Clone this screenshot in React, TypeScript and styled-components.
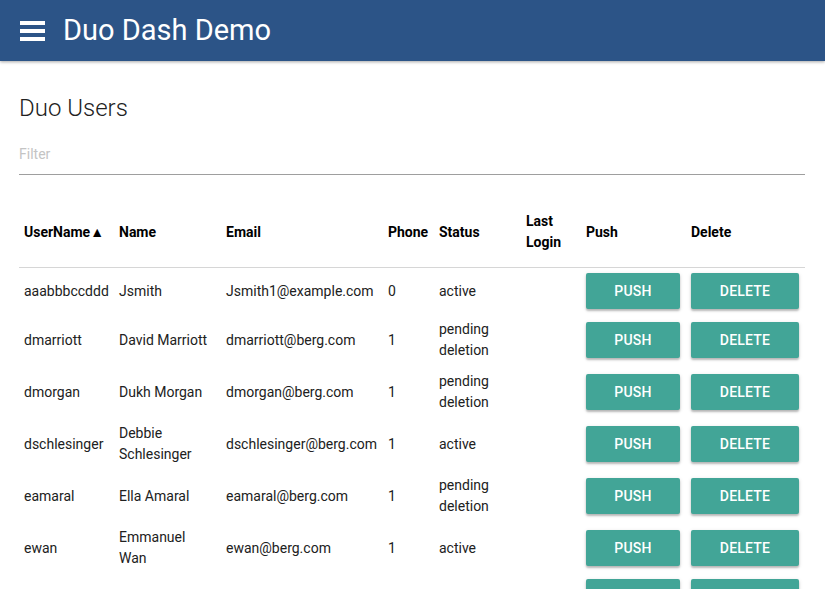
import React from "react";
import styled, { createGlobalStyle } from "styled-components";

const Global = createGlobalStyle`
  html, body { margin: 0; padding: 0; background: #fff; }
  body { font-family: Roboto, "Noto Sans", Arial, sans-serif; color: #212121; }
  * { box-sizing: border-box; }
`;

const AppBar = styled.header`
  height: 61px;
  background: #2c5487;
  display: flex;
  align-items: center;
  padding-left: 20px;
  gap: 18px;
  box-shadow: 0 1px 3px rgba(0, 0, 0, 0.35);
  position: relative;
  z-index: 1;
`;

const Burger = styled.div`
  width: 25px;
  display: flex;
  flex-direction: column;
  gap: 4px;
  span {
    display: block;
    height: 4px;
    background: #fff;
  }
`;

const AppTitle = styled.h1`
  margin: 0;
  color: #fff;
  font-size: 29px;
  font-weight: 400;
  line-height: 1;
`;

const Main = styled.main`
  padding: 0 20px 0 19px;
`;

const PageTitle = styled.h2`
  margin: 31px 0 0;
  font-size: 24px;
  font-weight: 300;
  line-height: 32px;
  color: #212121;
`;

const FilterInput = styled.input`
  display: block;
  width: 786px;
  margin-top: 20px;
  border: none;
  border-bottom: 1px solid #9e9e9e;
  padding: 0 0 10px;
  font-family: inherit;
  font-size: 14px;
  line-height: 20px;
  height: 31px;
  outline: none;
  color: #212121;
  &::placeholder { color: #c4c4c4; }
`;

const Table = styled.table`
  margin-top: 20px;
  width: 786px;
  table-layout: fixed;
  border-collapse: collapse;
  font-size: 14px;
  line-height: 21px;
`;

const Th = styled.th`
  text-align: left;
  font-weight: 700;
  color: #000;
  padding: 16px 5px 14px;
  vertical-align: middle;
  border-bottom: 1px solid #d6d6d6;
`;

const Td = styled.td<{ $nowrap?: boolean }>`
  padding: 5px;
  vertical-align: middle;
  color: #212121;
  white-space: ${(p) => (p.$nowrap ? "nowrap" : "normal")};
`;

const ActionButton = styled.button<{ $w: number }>`
  display: block;
  width: ${(p) => p.$w}px;
  height: 36px;
  border: none;
  border-radius: 2px;
  background: #42a597;
  color: #fff;
  font-family: inherit;
  font-size: 14px;
  font-weight: 500;
  text-transform: uppercase;
  letter-spacing: 0.2px;
  box-shadow: 0 2px 2px rgba(0, 0, 0, 0.22), 0 1px 4px rgba(0, 0, 0, 0.12);
  cursor: pointer;
`;

const widths = [95, 107, 162, 51, 87, 60, 105, 119];

const users = [
  ["aaabbbccddd", "Jsmith", "Jsmith1@example.com", "0", "active"],
  ["dmarriott", "David Marriott", "dmarriott@berg.com", "1", "pending deletion"],
  ["dmorgan", "Dukh Morgan", "dmorgan@berg.com", "1", "pending deletion"],
  ["dschlesinger", "Debbie Schlesinger", "dschlesinger@berg.com", "1", "active"],
  ["eamaral", "Ella Amaral", "eamaral@berg.com", "1", "pending deletion"],
  ["ewan", "Emmanuel Wan", "ewan@berg.com", "1", "active"],
  ["", "", "", "", ""],
];

export default function App() {
  return (
    <>
      <Global />
      <AppBar>
        <Burger>
          <span />
          <span />
          <span />
        </Burger>
        <AppTitle>Duo Dash Demo</AppTitle>
      </AppBar>
      <Main>
        <PageTitle>Duo Users</PageTitle>
        <FilterInput placeholder="Filter" />
        <Table>
          <colgroup>
            {widths.map((w, i) => (
              <col key={i} style={{ width: w }} />
            ))}
          </colgroup>
          <thead>
            <tr>
              <Th>UserName▲</Th>
              <Th>Name</Th>
              <Th>Email</Th>
              <Th>Phone</Th>
              <Th>Status</Th>
              <Th>Last Login</Th>
              <Th>Push</Th>
              <Th>Delete</Th>
            </tr>
          </thead>
          <tbody>
            {users.map((u, i) => (
              <tr key={i}>
                <Td>{u[0]}</Td>
                <Td>{u[1]}</Td>
                <Td $nowrap>{u[2]}</Td>
                <Td>{u[3]}</Td>
                <Td>{u[4]}</Td>
                <Td></Td>
                <Td>
                  <ActionButton $w={94}>Push</ActionButton>
                </Td>
                <Td>
                  <ActionButton $w={108}>Delete</ActionButton>
                </Td>
              </tr>
            ))}
          </tbody>
        </Table>
      </Main>
    </>
  );
}
